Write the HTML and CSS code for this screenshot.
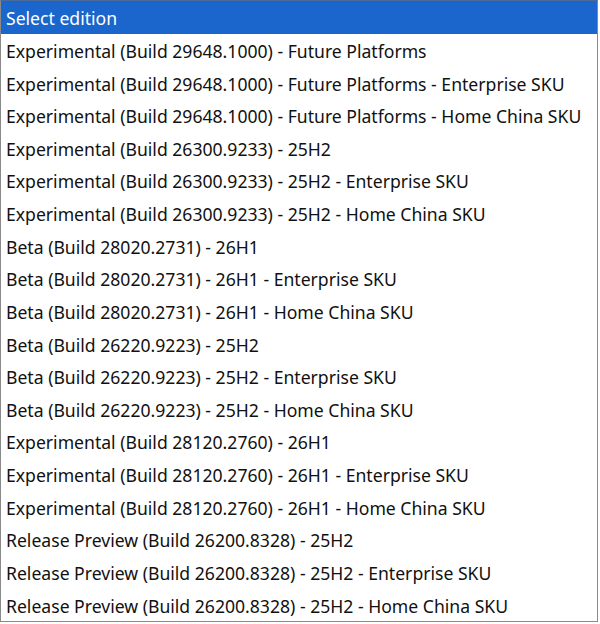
FILE: index.html
```html
<html>
<head>
<link rel="stylesheet" href="styles.css">
</head>
<body>

<div class="edition-list">
    <div class="option selected">Select edition</div>
    <div class="option">Experimental (Build 29648.1000) - Future Platforms</div>
    <div class="option">Experimental (Build 29648.1000) - Future Platforms - Enterprise SKU</div>
    <div class="option">Experimental (Build 29648.1000) - Future Platforms - Home China SKU</div>
    <div class="option">Experimental (Build 26300.9233) - 25H2</div>
    <div class="option">Experimental (Build 26300.9233) - 25H2 - Enterprise SKU</div>
    <div class="option">Experimental (Build 26300.9233) - 25H2 - Home China SKU</div>
    <div class="option">Beta (Build 28020.2731) - 26H1</div>
    <div class="option">Beta (Build 28020.2731) - 26H1 - Enterprise SKU</div>
    <div class="option">Beta (Build 28020.2731) - 26H1 - Home China SKU</div>
    <div class="option">Beta (Build 26220.9223) - 25H2</div>
    <div class="option">Beta (Build 26220.9223) - 25H2 - Enterprise SKU</div>
    <div class="option">Beta (Build 26220.9223) - 25H2 - Home China SKU</div>
    <div class="option">Experimental (Build 28120.2760) - 26H1</div>
    <div class="option">Experimental (Build 28120.2760) - 26H1 - Enterprise SKU</div>
    <div class="option">Experimental (Build 28120.2760) - 26H1 - Home China SKU</div>
    <div class="option">Release Preview (Build 26200.8328) - 25H2</div>
    <div class="option">Release Preview (Build 26200.8328) - 25H2 - Enterprise SKU</div>
    <div class="option">Release Preview (Build 26200.8328) - 25H2 - Home China SKU</div>
</div>

</body>
</html>
```

FILE: styles.css
```css
body {
    margin: 0;
    background-color: #ffffff;
}

.edition-list {
    width: 596px;
    height: 620px;
    border: 1px solid #8a8a8a;
    border-top-color: #4a6a9a;
    display: flex;
    flex-direction: column;

    font-family: "Noto Sans", "Open Sans", sans-serif;
    font-size: 17.6px;
    color: #111111;
}

.option {
    flex: 1;
    display: flex;
    align-items: center;
    padding-top: 2px;
    padding-left: 5px;
    white-space: nowrap;
}

.option.selected {
    background-color: #1a66cc;
    color: #ffffff;
}
```
